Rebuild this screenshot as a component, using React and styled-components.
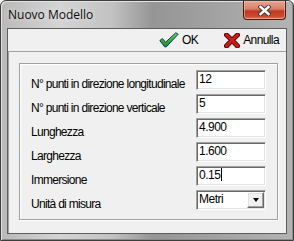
import React from "react";
import styled, { createGlobalStyle } from "styled-components";

const Global = createGlobalStyle`
  body {
    margin: 0;
    background: #ffffff;
  }
`;

const Window = styled.div`
  box-sizing: border-box;
  width: 294px;
  height: 241px;
  display: flex;
  flex-direction: column;
  padding: 0 6px 6px;
  border: 1px solid #3e3e3e;
  border-radius: 6px 6px 0 0;
  background: linear-gradient(90deg, #b9b9b9 0%, #d4d4d4 20%, #c2c2c2 38%, #959595 52%, #a3a3a3 75%, #b3b3b3 100%);
  box-shadow: inset 1px 1px 0 #e2e2e2, inset -1px -1px 0 #8a8a8a;
`;

const TitleBar = styled.div`
  height: 27px;
  display: flex;
  justify-content: space-between;
  align-items: flex-start;
`;

const Title = styled.div`
  padding: 5px 0 0 1px;
  font-family: "Open Sans", "Noto Sans", sans-serif;
  font-size: 12px;
  line-height: 17px;
  color: #0c0c0c;
  text-shadow: 0 0 6px rgba(255, 255, 255, 0.7);
`;

const CloseButton = styled.div`
  box-sizing: border-box;
  width: 43px;
  height: 19px;
  margin-right: 1px;
  display: flex;
  align-items: center;
  justify-content: center;
  border: 1px solid #4e1a12;
  border-top: none;
  border-radius: 0 0 4px 4px;
  background: linear-gradient(180deg, #e6a392 0%, #d7806a 45%, #c2391e 55%, #c94a30 85%, #dd7a5e 100%);
  box-shadow: inset 0 0 0 1px rgba(255, 210, 190, 0.45);
`;

const Client = styled.div`
  flex: 1;
  display: flex;
  flex-direction: column;
  border: 1px solid #5e5e5e;
  background: #f0f0f0;
`;

const Toolbar = styled.div`
  height: 22px;
  display: flex;
  align-items: center;
  justify-content: flex-end;
  padding-right: 7px;
  gap: 26px;
`;

const ToolButton = styled.div`
  display: flex;
  align-items: center;
  gap: ${(p) => p.gap || 3}px;
  font-family: "Liberation Sans", Arial, sans-serif;
  font-size: 12px;
  letter-spacing: -0.6px;
  color: #000;
`;

const Body = styled.div`
  flex: 1;
  display: flex;
  flex-direction: column;
  padding: 11px 8px 11px 10px;
  border-top: 1px solid #a0a0a0;
  border-left: 1px solid #a0a0a0;
`;

const GroupBox = styled.div`
  display: flex;
  flex-direction: column;
  gap: 4px;
  padding: 6px 11px 9px 11px;
  border: 1px solid #a0a0a0;
  box-shadow: inset 1px 1px 0 #ffffff, 1px 1px 0 #ffffff;
`;

const Row = styled.div`
  height: 20px;
  display: flex;
  align-items: flex-end;
  justify-content: space-between;
`;

const Label = styled.span`
  font-family: "Liberation Sans", Arial, sans-serif;
  font-size: 12px;
  line-height: 12px;
  letter-spacing: -0.7px;
  color: #000;
  margin-bottom: 0;
`;

const Field = styled.div`
  box-sizing: border-box;
  width: 70px;
  height: 20px;
  display: flex;
  align-items: flex-start;
  padding: 1px 0 0 2px;
  border: 1px solid;
  border-color: #a0a0a0 #ffffff #ffffff #a0a0a0;
  box-shadow: inset 1px 1px 0 #696969, inset -1px -1px 0 #e3e3e3;
  background: #ffffff;
  font-family: "Liberation Sans", Arial, sans-serif;
  font-size: 12px;
  line-height: 14px;
  letter-spacing: -0.5px;
  color: #000;
`;

const Caret = styled.span`
  display: inline-block;
  width: 1px;
  height: 13px;
  margin-left: 1px;
  background: #000;
`;

const DropButton = styled.div`
  box-sizing: border-box;
  width: 17px;
  height: 16px;
  margin-left: auto;
  margin-right: 1px;
  display: flex;
  align-items: center;
  justify-content: center;
  background: #f0f0f0;
  border: 1px solid;
  border-color: #ffffff #696969 #696969 #ffffff;
  box-shadow: inset -1px -1px 0 #a0a0a0, inset 1px 1px 0 #e3e3e3;
`;

const Arrow = styled.span`
  width: 0;
  height: 0;
  border-left: 3.5px solid transparent;
  border-right: 3.5px solid transparent;
  border-top: 4px solid #000;
`;

const CheckIcon = () => (
  <svg width="20" height="16" viewBox="0 0 20 16">
    <defs>
      <linearGradient id="gck" x1="0" y1="0" x2="0" y2="1">
        <stop offset="0" stopColor="#6fd35c" />
        <stop offset="1" stopColor="#168a2a" />
      </linearGradient>
    </defs>
    <path
      d="M0.8 8.6 L3.4 6.6 L6.6 10.2 L16.8 0.8 L19.2 2.2 L7.4 14.8 L5.6 14.8 Z"
      fill="url(#gck)"
      stroke="#0b3d5c"
      strokeWidth="1"
      strokeLinejoin="round"
    />
  </svg>
);

const CancelIcon = () => (
  <svg width="16" height="15" viewBox="0 0 16 15">
    <path d="M2.5 2 Q8 7 13.5 13 M13.5 2 Q7 8 2.5 13" stroke="#5a0606" strokeWidth="5" strokeLinecap="round" fill="none" />
    <path d="M2.5 2 Q8 7 13.5 13 M13.5 2 Q7 8 2.5 13" stroke="#d11a1a" strokeWidth="3" strokeLinecap="round" fill="none" />
  </svg>
);

const CloseGlyph = () => (
  <svg width="13" height="11" viewBox="0 0 13 11">
    <path d="M2.5 2 L10.5 9 M10.5 2 L2.5 9" stroke="#4b3b38" strokeWidth="4.4" strokeLinecap="square" fill="none" />
    <path d="M2.5 2 L10.5 9 M10.5 2 L2.5 9" stroke="#ffffff" strokeWidth="2.4" strokeLinecap="square" fill="none" />
  </svg>
);

const fields = [
  { label: "N° punti in direzione longitudinale", value: "12" },
  { label: "N° punti in direzione verticale", value: "5" },
  { label: "Lunghezza", value: "4.900" },
  { label: "Larghezza", value: "1.600" },
  { label: "Immersione", value: "0.15", focused: true },
];

const App = () => {
  return (
    <>
      <Global />
      <Window>
        <TitleBar>
          <Title>Nuovo Modello</Title>
          <CloseButton>
            <CloseGlyph />
          </CloseButton>
        </TitleBar>
        <Client>
          <Toolbar>
            <ToolButton gap={3}>
              <CheckIcon />
              OK
            </ToolButton>
            <ToolButton gap={3}>
              <CancelIcon />
              Annulla
            </ToolButton>
          </Toolbar>
          <Body>
            <GroupBox>
              {fields.map((f) => (
                <Row key={f.label}>
                  <Label>{f.label}</Label>
                  <Field>
                    {f.value}
                    {f.focused && <Caret />}
                  </Field>
                </Row>
              ))}
              <Row>
                <Label>Unità di misura</Label>
                <Field>
                  Metri
                  <DropButton>
                    <Arrow />
                  </DropButton>
                </Field>
              </Row>
            </GroupBox>
          </Body>
        </Client>
      </Window>
    </>
  );
};

export default App;
